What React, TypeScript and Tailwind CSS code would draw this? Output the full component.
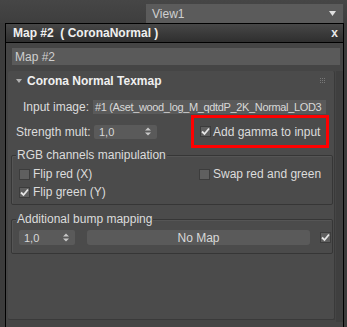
import React from "react";

const Check = ({ checked }: { checked?: boolean }) => (
  <div className="w-[11px] h-[11px] bg-[#5f5f5f] border border-[#3c3c3c] flex items-center justify-center shrink-0">
    {checked && (
      <svg width="9" height="9" viewBox="0 0 9 9">
        <path d="M1 4.5 L3.5 7 L8 1.5" stroke="#e6e6e6" strokeWidth="1.8" fill="none" />
      </svg>
    )}
  </div>
);

const Spin = ({ className }: { className: string }) => (
  <div className={"flex items-center justify-between bg-[#5a5a5a] rounded-[2px] pl-[5px] pr-[6px] text-[#d8d8d8] " + className}>
    <span>1,0</span>
    <svg width="6" height="9" viewBox="0 0 6 9">
      <path d="M0 3.5 L3 0.5 L6 3.5 Z M0 5.5 L3 8.5 L6 5.5 Z" fill="#c8c8c8" />
    </svg>
  </div>
);

export default function App() {
  return (
    <div className="w-[347px] h-[327px] bg-[#3c3c3c] overflow-hidden text-[11px] leading-[14px] text-[#dcdcdc] font-['Liberation_Sans',Arial,sans-serif]">
      {/* Viewport dropdown */}
      <div className="h-[23px] flex justify-end pt-[4px] pr-[4px] bg-gradient-to-b from-[#464646] to-[#3e3e3e]">
        <div className="w-[197px] h-[19px] bg-[#5b5b5b] flex items-center justify-between pl-[6px] pr-[7px] text-[12px] text-[#d0d0d0]">
          <span>View1</span>
          <svg width="7" height="5" viewBox="0 0 7 5">
            <path d="M0 0 L7 0 L3.5 5 Z" fill="#e0e0e0" />
          </svg>
        </div>
      </div>

      {/* Material editor window */}
      <div className="ml-[5px] mr-[3px] h-[304px] border-t border-l border-r border-black bg-[#454545] flex flex-col">
        <div className="h-[19px] border-b border-black bg-gradient-to-b from-[#474747] to-[#2f2f2f] flex items-center justify-between pl-[7px] pr-[5px]">
          <span className="font-bold text-[12px] text-[#f0f0f0] whitespace-pre">Map #2  ( CoronaNormal )</span>
          <span className="font-bold text-[12px] text-[#e8e8e8] leading-none">x</span>
        </div>

        <div className="ml-[6px] mr-[3px] mt-[5px] h-[17px] bg-[#5a5a5a] flex items-center pl-[3px] text-[12px] text-[#cfcfcf]">
          Map #2
        </div>

        <div className="flex flex-1 mt-[6px] ml-[2px]">
          {/* Rollout */}
          <div className="w-[328px] h-[249px] bg-[#4b4b4b] rounded-[2px] border-r border-b border-[#3a3a3a] flex flex-col">
            <div className="h-[19px] flex items-center justify-between pl-[8px] pr-[9px]">
              <div className="flex items-center gap-[5px]">
                <svg width="6" height="4" viewBox="0 0 6 4">
                  <path d="M0 0 L6 0 L3 4 Z" fill="#b0b0b0" />
                </svg>
                <span className="font-bold text-[12px] text-[#f0f0f0]">Corona Normal Texmap</span>
              </div>
              <svg width="5" height="5" viewBox="0 0 5 5">
                <g fill="#777">
                  <rect x="0" y="0" width="1" height="1" /><rect x="2" y="0" width="1" height="1" /><rect x="4" y="0" width="1" height="1" />
                  <rect x="0" y="2" width="1" height="1" /><rect x="2" y="2" width="1" height="1" /><rect x="4" y="2" width="1" height="1" />
                  <rect x="0" y="4" width="1" height="1" /><rect x="2" y="4" width="1" height="1" /><rect x="4" y="4" width="1" height="1" />
                </g>
              </svg>
            </div>

            <div className="flex items-center mt-[10px] pl-[15px] h-[14px]">
              <span className="w-[70px] text-[12px]">Input image:</span>
              <div className="w-[233px] h-[14px] bg-[#5a5a5a] flex items-center pl-[2px] overflow-hidden whitespace-nowrap text-[#d8d8d8] tracking-[-0.35px]">
                #1 (Aset_wood_log_M_qdtdP_2K_Normal_LOD3
              </div>
            </div>

            <div className="flex items-center mt-[1px] pl-[8px] h-[33px]">
              <span className="w-[78px] text-[12px]">Strength mult:</span>
              <Spin className="w-[63px] h-[14px]" />
              <div className="ml-[34px] w-[138px] h-[33px] border-[3px] border-[#ff0000] flex items-center gap-[2px] pl-[6px]">
                <Check checked />
                <span className="text-[12px]">Add gamma to input</span>
              </div>
            </div>

            {/* RGB group */}
            <div className="relative mt-[7px] ml-[3px] w-[322px] h-[50px] border border-[#363636] rounded-[2px] shadow-[inset_1px_1px_0_#555]">
              <span className="absolute -top-[8px] left-[4px] bg-[#4b4b4b] px-[1px] text-[12px]">RGB channels manipulation</span>
              <div className="flex flex-col gap-[4px] pt-[11px] pl-[7px]">
                <div className="flex items-center">
                  <div className="w-[180px] flex items-center gap-[3px]">
                    <Check />
                    <span className="text-[12px]">Flip red (X)</span>
                  </div>
                  <div className="flex items-center gap-[3px]">
                    <Check />
                    <span className="text-[12px]">Swap red and green</span>
                  </div>
                </div>
                <div className="flex items-center gap-[3px]">
                  <Check checked />
                  <span className="text-[12px]">Flip green (Y)</span>
                </div>
              </div>
            </div>

            {/* Bump group */}
            <div className="relative mt-[14px] ml-[3px] w-[322px] h-[35px] border border-[#363636] rounded-[2px] shadow-[inset_1px_1px_0_#555]">
              <span className="absolute -top-[8px] left-[4px] bg-[#4b4b4b] px-[1px] text-[12px]">Additional bump mapping</span>
              <div className="flex items-center pt-[10px] pl-[7px]">
                <Spin className="w-[56px] h-[15px]" />
                <div className="ml-[12px] w-[223px] h-[15px] bg-[#5a5a5a] rounded-[3px] flex items-center justify-center text-[12px] text-[#d8d8d8]">
                  No Map
                </div>
                <div className="ml-[10px]">
                  <Check checked />
                </div>
              </div>
            </div>
          </div>

          {/* Scrollbar track */}
          <div className="w-[7px] h-[251px] bg-[#3f3f3f] ml-[1px]" />
        </div>
      </div>
    </div>
  );
}
